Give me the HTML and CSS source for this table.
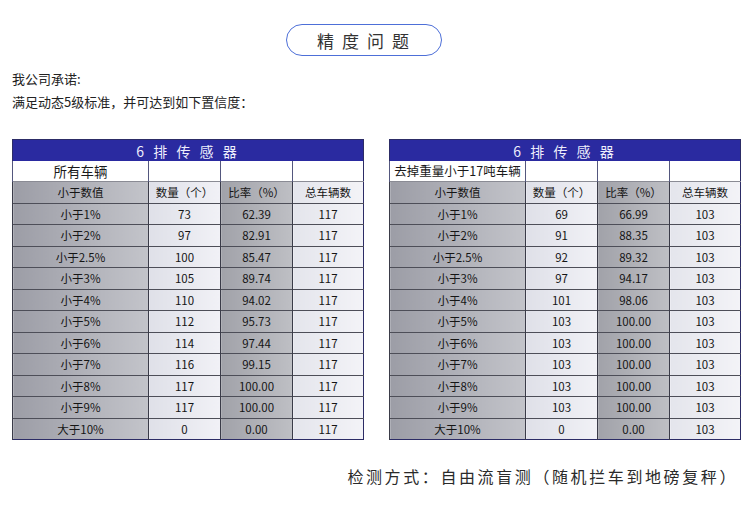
FILE: index.html
```html
<!DOCTYPE html>
<html lang="zh">
<head>
<meta charset="utf-8">
<link rel="stylesheet" href="styles.css">
</head>
<body>
<div class="page">
  <div class="pill">精度问题</div>
  <div class="intro">
    <p>我公司承诺:</p>
    <p>满足动态5级标准，并可达到如下置信度：</p>
  </div>
  <div class="tables">
    <table class="grid">
      <colgroup><col class="w1"><col class="w2"><col class="w2"><col class="w4"></colgroup>
      <tr class="head"><td colspan="4">6 排 传 感 器</td></tr>
      <tr class="title"><td>所有车辆</td><td></td><td></td><td></td></tr>
      <tr class="cols"><td class="c1">小于数值</td><td class="c2">数量（个）</td><td class="c3">比率（%）</td><td class="c4">总车辆数</td></tr>
      <tr><td class="c1">小于1%</td><td class="c2">73</td><td class="c3">62.39</td><td class="c4">117</td></tr>
      <tr><td class="c1">小于2%</td><td class="c2">97</td><td class="c3">82.91</td><td class="c4">117</td></tr>
      <tr><td class="c1">小于2.5%</td><td class="c2">100</td><td class="c3">85.47</td><td class="c4">117</td></tr>
      <tr><td class="c1">小于3%</td><td class="c2">105</td><td class="c3">89.74</td><td class="c4">117</td></tr>
      <tr><td class="c1">小于4%</td><td class="c2">110</td><td class="c3">94.02</td><td class="c4">117</td></tr>
      <tr><td class="c1">小于5%</td><td class="c2">112</td><td class="c3">95.73</td><td class="c4">117</td></tr>
      <tr><td class="c1">小于6%</td><td class="c2">114</td><td class="c3">97.44</td><td class="c4">117</td></tr>
      <tr><td class="c1">小于7%</td><td class="c2">116</td><td class="c3">99.15</td><td class="c4">117</td></tr>
      <tr><td class="c1">小于8%</td><td class="c2">117</td><td class="c3">100.00</td><td class="c4">117</td></tr>
      <tr><td class="c1">小于9%</td><td class="c2">117</td><td class="c3">100.00</td><td class="c4">117</td></tr>
      <tr><td class="c1">大于10%</td><td class="c2">0</td><td class="c3">0.00</td><td class="c4">117</td></tr>
    </table>
    <table class="grid">
      <colgroup><col class="w1"><col class="w2"><col class="w2"><col class="w4"></colgroup>
      <tr class="head"><td colspan="4">6 排 传 感 器</td></tr>
      <tr class="title"><td class="narrow">去掉重量小于17吨车辆</td><td></td><td></td><td></td></tr>
      <tr class="cols"><td class="c1">小于数值</td><td class="c2">数量（个）</td><td class="c3">比率（%）</td><td class="c4">总车辆数</td></tr>
      <tr><td class="c1">小于1%</td><td class="c2">69</td><td class="c3">66.99</td><td class="c4">103</td></tr>
      <tr><td class="c1">小于2%</td><td class="c2">91</td><td class="c3">88.35</td><td class="c4">103</td></tr>
      <tr><td class="c1">小于2.5%</td><td class="c2">92</td><td class="c3">89.32</td><td class="c4">103</td></tr>
      <tr><td class="c1">小于3%</td><td class="c2">97</td><td class="c3">94.17</td><td class="c4">103</td></tr>
      <tr><td class="c1">小于4%</td><td class="c2">101</td><td class="c3">98.06</td><td class="c4">103</td></tr>
      <tr><td class="c1">小于5%</td><td class="c2">103</td><td class="c3">100.00</td><td class="c4">103</td></tr>
      <tr><td class="c1">小于6%</td><td class="c2">103</td><td class="c3">100.00</td><td class="c4">103</td></tr>
      <tr><td class="c1">小于7%</td><td class="c2">103</td><td class="c3">100.00</td><td class="c4">103</td></tr>
      <tr><td class="c1">小于8%</td><td class="c2">103</td><td class="c3">100.00</td><td class="c4">103</td></tr>
      <tr><td class="c1">小于9%</td><td class="c2">103</td><td class="c3">100.00</td><td class="c4">103</td></tr>
      <tr><td class="c1">大于10%</td><td class="c2">0</td><td class="c3">0.00</td><td class="c4">103</td></tr>
    </table>
  </div>
  <div class="method">检测方式：自由流盲测（随机拦车到地磅复秤）</div>
</div>
</body>
</html>
```

FILE: styles.css
```css
html, body {
  margin: 0;
  padding: 0;
  background: #ffffff;
}
body {
  font-family: "Noto Sans CJK SC", "Noto Sans", sans-serif;
  color: #222;
}
.page {
  width: 750px;
  height: 507px;
  overflow: hidden;
}
.pill {
  box-sizing: border-box;
  margin: 24px 0 0 286px;
  width: 156px;
  height: 32px;
  border: 1.5px solid #4d6fd8;
  border-radius: 16px;
  display: flex;
  align-items: center;
  justify-content: center;
  font-size: 17px;
  letter-spacing: 8px;
  padding-left: 6px;
  color: #333;
}
.intro {
  margin-top: 11px;
  padding-left: 12px;
  font-size: 13px;
  line-height: 23px;
  color: #222;
}
.intro p {
  margin: 0;
}
.tables {
  margin-top: 26px;
  padding-left: 12px;
  display: flex;
  gap: 25px;
}
.grid {
  width: 351px;
  border-collapse: collapse;
  table-layout: fixed;
  border: 1px solid #2c2c66;
  font-size: 11.5px;
  color: #151515;
}
.w1 { width: 136px; }
.w2 { width: 72px; }
.w4 { width: 71px; }
.grid td {
  padding: 0;
  text-align: center;
  height: 20.5px;
  line-height: 14px;
  white-space: nowrap;
  border-top: 1px solid #4d4e58;
  border-left: 1.5px solid #3a3b48;
}
.grid .head td {
  height: 21px;
  background: #2a2aa0;
  color: #eeeefc;
  font-size: 14px;
  letter-spacing: 3px;
  border: none;
}
.grid .title td {
  background: #ffffff;
  font-size: 13.5px;
  color: #1a1a1a;
  border-top: none;
  border-left: 1.5px solid #54577e;
  height: 20px;
}
.grid .title td.narrow {
  font-size: 12.5px;
}
.grid .cols td {
  border-top: 1px solid #8a8b94;
}
.c1 {
  background: linear-gradient(to right, #9c9da6, #c3c4ca);
}
.c2 {
  background: linear-gradient(to right, #dfe0e8, #f1f1f6);
}
.c3 {
  background: linear-gradient(to right, #a1a2a9, #bebfc4);
}
.c4 {
  background: linear-gradient(to right, #e4e5ec, #f3f3f7);
}
.method {
  margin-top: 24px;
  padding-right: 12px;
  text-align: right;
  font-size: 16px;
  line-height: 24px;
  letter-spacing: 2.6px;
  color: #2a2a2a;
}
```
